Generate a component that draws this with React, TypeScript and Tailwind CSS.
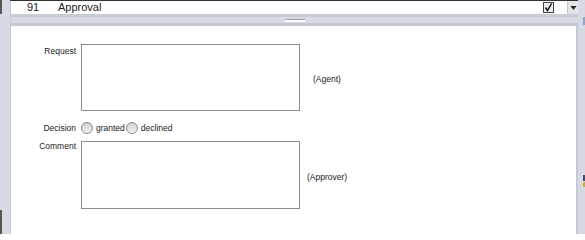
import React from "react";

export default function App() {
  return (
    <div className="w-[585px] h-[234px] overflow-hidden flex bg-[#d6dae2]" style={{ fontFamily: '"Liberation Sans", Arial, sans-serif' }}>
      <div className="w-[10px] flex flex-col shrink-0">
        <div className="h-[14px] border-l-2 border-[#555]" />
        <div className="flex-1" />
        <div className="h-[24px] border-l-2 border-[#555]" />
      </div>
      <div className="flex-1 flex flex-col min-w-0">
        <div className="h-[14px] flex items-stretch border-t border-[#333] bg-white">
          <div className="flex-1 flex items-center text-[11px] text-[#222] leading-none pl-[16px] border-l border-[#c6cad2]">
            <span className="w-[31px]">91</span>
            <span>Approval</span>
          </div>
          <div className="w-[21px] flex items-center justify-start">
            <div className="w-[11px] h-[11px] border border-[#444] bg-[#e8ecf2] flex items-center justify-center">
              <svg width="9" height="9" viewBox="0 0 9 9"><path d="M1.5 4.5 L3.5 7.5 L7.5 0.5" fill="none" stroke="#111" strokeWidth="1.5" /></svg>
            </div>
          </div>
          <div className="w-[3px] bg-white" />
          <div className="w-[11px] bg-[#e2e4e8] border-l border-[#c8c8c8] flex items-center justify-center">
            <svg width="7" height="6" viewBox="0 0 7 6"><path d="M0.5 1 L6.5 1 L3.5 5 Z" fill="#222" /></svg>
          </div>
        </div>
        <div className="h-[11px] flex flex-col border-l border-[#c6cad2]">
          <div className="h-[3px] bg-[#c8ccd4]" />
          <div className="flex-1 bg-[#d6dae2] flex items-center justify-center">
            <div className="w-[20px] h-[3px] bg-white border-t border-[#9aa0aa]" />
          </div>
          <div className="h-[2px] bg-[#c4c8d0]" />
        </div>
        <div className="flex-1 flex">
          <div className="flex-1 bg-white border-l border-t border-[#c6cad2] pt-[18px] text-[8.5px] text-[#222] leading-none">
            <div className="flex">
              <div className="w-[70px] text-right pr-[5px] pt-[3px]">Request</div>
              <div className="w-[219px] h-[67px] border border-[#8c8c8c]" />
              <div className="pl-[13px] pt-[31px]">(Agent)</div>
            </div>
            <div className="flex items-center mt-[11px]">
              <div className="w-[70px] text-right pr-[5px]">Decision</div>
              <div className="flex items-center">
                <span className="w-[12px] h-[12px] rounded-full border border-[#888] bg-gradient-to-b from-[#cfcfcf] to-[#f4f4f4] mr-[3px]" />
                <span className="mr-[1px]">granted</span>
                <span className="w-[12px] h-[12px] rounded-full border border-[#888] bg-gradient-to-b from-[#cfcfcf] to-[#f4f4f4] mr-[3px]" />
                <span>declined</span>
              </div>
            </div>
            <div className="flex mt-[7px]">
              <div className="w-[70px] text-right pr-[5px] pt-[1px]">Comment</div>
              <div className="w-[219px] h-[68px] border border-[#8c8c8c]" />
              <div className="pl-[7px] pt-[32px]">(Approver)</div>
            </div>
          </div>
          <div className="w-[2px] bg-[#c6cad2]" />
        </div>
      </div>
      <div className="w-[7px] shrink-0 flex flex-col bg-[#d6dae2]">
        <div className="h-[25px] flex items-end justify-end"><div className="w-[2px] h-[8px] bg-[#8fa6c8]" /></div>
        <div className="h-[150px]" />
        <div className="flex justify-end"><div className="w-[2px] h-[6px] bg-[#4a4a6a]" /></div>
        <div className="flex justify-end mt-[1px]"><div className="w-[2px] h-[5px] bg-[#c8a850]" /></div>
      </div>
    </div>
  );
}
